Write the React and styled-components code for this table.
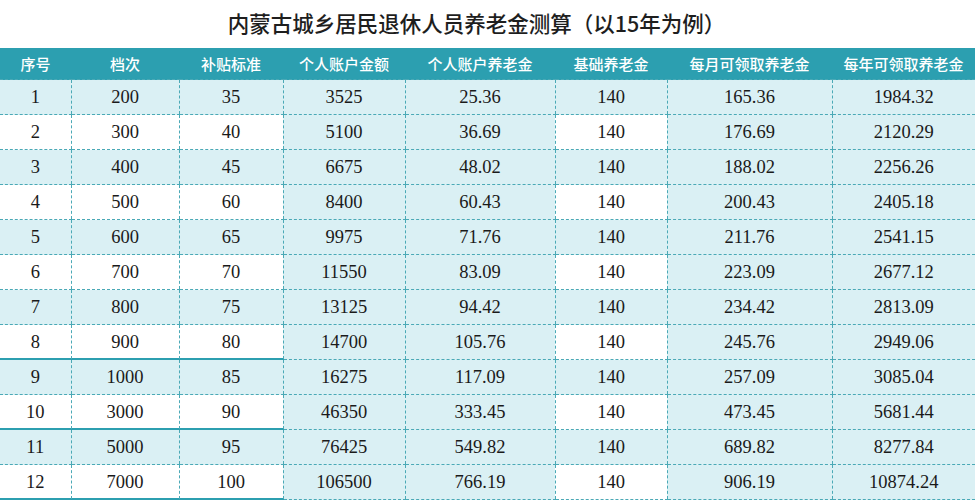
import React from "react";
import styled, { createGlobalStyle } from "styled-components";

const Global = createGlobalStyle`
  html, body { margin: 0; padding: 0; background: #ffffff; }
  body { width: 975px; height: 500px; overflow: hidden; }
`;

const TEAL = "#2c9fb0";
const LINE = "#4aa9b6";
const LIGHT = "#daf0f4";

const Page = styled.div`
  width: 975px;
  height: 500px;
  display: flex;
  flex-direction: column;
  background: #fff;
`;

const Title = styled.h1`
  margin: 0;
  height: 48px;
  flex: none;
  display: flex;
  align-items: center;
  justify-content: center;
  padding: 0 22px 3px 0;
  box-sizing: border-box;
  font-family: "Noto Sans CJK SC", "Liberation Serif", serif;
  font-weight: 500;
  font-size: 21.5px;
  color: #1e1e1e;
`;

const Table = styled.table`
  width: 975px;
  border-collapse: collapse;
  table-layout: fixed;
  flex: none;
`;

const Head = styled.th`
  height: 31px;
  padding: 0;
  background: ${TEAL};
  color: #ffffff;
  font-family: "Noto Sans CJK SC", sans-serif;
  font-weight: 500;
  font-size: 15px;
  text-align: center;
  border-bottom: 1px dashed ${LINE};
`;

const Cell = styled.td`
  height: 34px;
  padding: 0;
  line-height: 1;
  text-align: center;
  font-family: "Liberation Serif", serif;
  font-size: 18.5px;
  color: #1a1a1a;
  background: ${(p) => (p.$shaded ? LIGHT : "#ffffff")};
  border-left: ${(p) => (p.$first ? "none" : `1px dashed ${LINE}`)};
  border-bottom: ${(p) => (p.$solid ? `1px solid ${TEAL}` : `1px dashed ${LINE}`)};
  box-shadow: ${(p) => (p.$solid ? `inset 0 -1px 0 ${TEAL}` : "none")};
`;

const widths = [71, 108, 104, 122, 150, 112, 165, 143];
const headers = ["序号", "档次", "补贴标准", "个人账户金额", "个人账户养老金", "基础养老金", "每月可领取养老金", "每年可领取养老金"];
const rows = [
  ["1", "200", "35", "3525", "25.36", "140", "165.36", "1984.32"],
  ["2", "300", "40", "5100", "36.69", "140", "176.69", "2120.29"],
  ["3", "400", "45", "6675", "48.02", "140", "188.02", "2256.26"],
  ["4", "500", "60", "8400", "60.43", "140", "200.43", "2405.18"],
  ["5", "600", "65", "9975", "71.76", "140", "211.76", "2541.15"],
  ["6", "700", "70", "11550", "83.09", "140", "223.09", "2677.12"],
  ["7", "800", "75", "13125", "94.42", "140", "234.42", "2813.09"],
  ["8", "900", "80", "14700", "105.76", "140", "245.76", "2949.06"],
  ["9", "1000", "85", "16275", "117.09", "140", "257.09", "3085.04"],
  ["10", "3000", "90", "46350", "333.45", "140", "473.45", "5681.44"],
  ["11", "5000", "95", "76425", "549.82", "140", "689.82", "8277.84"],
  ["12", "7000", "100", "106500", "766.19", "140", "906.19", "10874.24"],
];

const alternating = new Set([0, 1, 2, 5]);
const solidRows = new Set([7, 9, 11]);

export default function App() {
  return (
    <Page>
      <Global />
      <Title>内蒙古城乡居民退休人员养老金测算（以15年为例）</Title>
      <Table>
        <colgroup>
          {widths.map((w, i) => (
            <col key={i} style={{ width: w }} />
          ))}
        </colgroup>
        <thead>
          <tr>
            {headers.map((h) => (
              <Head key={h}>{h}</Head>
            ))}
          </tr>
        </thead>
        <tbody>
          {rows.map((r, ri) => (
            <tr key={ri}>
              {r.map((v, ci) => (
                <Cell
                  key={ci}
                  $first={ci === 0}
                  $shaded={alternating.has(ci) ? ri % 2 === 0 : true}
                  $solid={ci < 3 && solidRows.has(ri)}
                >
                  {v}
                </Cell>
              ))}
            </tr>
          ))}
        </tbody>
      </Table>
    </Page>
  );
}
